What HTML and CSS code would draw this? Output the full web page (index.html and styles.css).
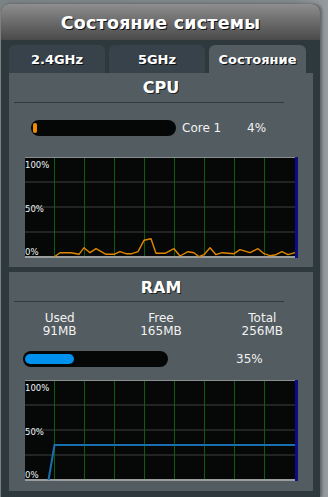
FILE: index.html
```html
<!DOCTYPE html>
<html lang="ru">
<head>
<meta charset="utf-8">
<title>Состояние системы</title>
<link rel="stylesheet" href="styles.css">
</head>
<body>
<div class="panel">
  <div class="title">Состояние системы</div>
  <div class="tabs">
    <div class="tab">2.4GHz</div>
    <div class="tab">5GHz</div>
    <div class="tab active">Состояние</div>
  </div>
  <div class="content">
    <section class="block cpu">
      <h3 class="block-title">CPU</h3>
      <div class="sep"></div>
      <div class="bar-row cpu-row">
        <div class="bar"><div class="fill fill-cpu" style="width:3%"></div></div>
        <span class="core-label">Core 1</span>
        <span class="core-pct">4%</span>
      </div>
      <div class="graph">
        <svg width="273" height="101" viewBox="0 0 273 101">
          <rect x="0" y="0" width="273" height="101" fill="#060808"/>
          <rect x="0" y="24" width="270" height="2" fill="#222424"/>
          <rect x="0" y="49" width="270" height="2" fill="#222424"/>
          <rect x="0" y="74" width="270" height="2" fill="#222424"/>
          <g fill="#0e5c10">
            <rect x="29" y="0" width="1" height="100"/>
            <rect x="59" y="0" width="1" height="100"/>
            <rect x="89" y="0" width="1" height="100"/>
            <rect x="119" y="0" width="1" height="100"/>
            <rect x="149" y="0" width="1" height="100"/>
            <rect x="179" y="0" width="1" height="100"/>
            <rect x="209" y="0" width="1" height="100"/>
            <rect x="239" y="0" width="1" height="100"/>
          </g>
          <rect x="0" y="0" width="270" height="1" fill="#8a8e8f"/>
          <rect x="0" y="99" width="270" height="2" fill="#9a9e9f"/>
          <rect x="270" y="0" width="3" height="101" fill="#0c0c86"/>
          <polyline fill="none" stroke="#e08600" stroke-width="1.4" stroke-linejoin="round"
            points="29,100 35,95.7 46,95.7 54,97.3 59,90.7 65,95.7 71,91.7 81,97.3 89,97.3 95,94.7 101,96.7 107,96.7 113,94.7 119,83.3 126,81.7 131,96.3 140,96.3 149,91.7 155,99 163,94.7 169,95.7 174,99.7 179,97.7 185,90.7 191,97.7 197,95.7 209,96.7 215,92.7 225,95.7 233,91.7 239,96.7 245,98.7 251,97.7 257,94.7 263,97.7 270,95.7"/>
          <g class="glabel">
            <text x="0" y="11">100%</text>
            <text x="0" y="55">50%</text>
            <text x="0" y="98">0%</text>
          </g>
        </svg>
      </div>
    </section>
    <section class="block ram">
      <h3 class="block-title">RAM</h3>
      <div class="sep"></div>
      <div class="mem-table">
        <div class="mem-col"><div>Used</div><div>91MB</div></div>
        <div class="mem-col"><div>Free</div><div>165MB</div></div>
        <div class="mem-col"><div>Total</div><div>256MB</div></div>
      </div>
      <div class="bar-row ram-row">
        <div class="bar"><div class="fill fill-ram" style="width:35%"></div></div>
        <span class="ram-pct">35%</span>
      </div>
      <div class="graph">
        <svg width="273" height="101" viewBox="0 0 273 101">
          <rect x="0" y="0" width="273" height="101" fill="#060808"/>
          <rect x="0" y="24" width="270" height="2" fill="#222424"/>
          <rect x="0" y="49" width="270" height="2" fill="#222424"/>
          <rect x="0" y="74" width="270" height="2" fill="#222424"/>
          <g fill="#0e5c10">
            <rect x="29" y="0" width="1" height="100"/>
            <rect x="59" y="0" width="1" height="100"/>
            <rect x="89" y="0" width="1" height="100"/>
            <rect x="119" y="0" width="1" height="100"/>
            <rect x="149" y="0" width="1" height="100"/>
            <rect x="179" y="0" width="1" height="100"/>
            <rect x="209" y="0" width="1" height="100"/>
            <rect x="239" y="0" width="1" height="100"/>
          </g>
          <rect x="0" y="0" width="270" height="1" fill="#8a8e8f"/>
          <rect x="0" y="99" width="270" height="2" fill="#9a9e9f"/>
          <rect x="270" y="0" width="3" height="101" fill="#0c0c86"/>
          <polyline fill="none" stroke="#1a6fae" stroke-width="2" stroke-linejoin="miter"
            points="23.5,100 29.5,65 270,65"/>
          <g class="glabel">
            <text x="0" y="11">100%</text>
            <text x="0" y="55">50%</text>
            <text x="0" y="98">0%</text>
          </g>
        </svg>
      </div>
    </section>
  </div>
</div>
</body>
</html>
```
FILE: styles.css
```css
html, body {
  margin: 0;
  padding: 0;
}
body {
  background: linear-gradient(to right, #7a8286 0%, #7f878b 90%, #959b9e 100%);
  font-family: "DejaVu Sans", Verdana, sans-serif;
  color: #fff;
  height: 497px;
  overflow: hidden;
}
.panel {
  margin: 4px 0 0 1px;
  width: 319px;
  min-height: 493px;
  background: #2e393d;
  border-radius: 8px 8px 0 0;
  box-shadow: 2px 0 3px rgba(0, 0, 0, 0.35);
}
.title {
  height: 36px;
  line-height: 38px;
  text-align: center;
  font-weight: bold;
  font-size: 17.5px;
  letter-spacing: 0.2px;
  border-radius: 8px 8px 0 0;
  background: linear-gradient(to bottom, #8e8e8e 0%, #6b6b6b 50%, #4a4a4a 100%);
  text-shadow: 1px 1px 0 #111;
}
.tabs {
  display: flex;
  gap: 4px;
  padding: 5px 0 0 8px;
}
.tab {
  width: 96px;
  height: 28px;
  line-height: 29px;
  text-align: center;
  font-weight: bold;
  font-size: 13px;
  background: #37424a;
  border-radius: 6px 6px 0 0;
  text-shadow: 1px 1px 0 #111;
}
.tab.active {
  width: 97px;
  background: #525c61;
}
.content {
  margin: 0 7px 0 8px;
  display: flex;
  flex-direction: column;
  gap: 5px;
}
.block {
  background: #525c61;
}
.cpu {
  height: 194px;
  padding-top: 5px;
  box-sizing: border-box;
}
.ram {
  height: 219px;
  padding-top: 6px;
  box-sizing: border-box;
}
.block-title {
  margin: 0;
  font-size: 16px;
  line-height: 20px;
  font-weight: bold;
  text-align: center;
  text-shadow: 1px 1px 0 #222;
}
.sep {
  margin: 4px 0 0 5px;
  width: 270px;
  height: 1px;
  background: #30393d;
}
.ram .sep {
  margin-top: 3px;
}
.bar-row {
  display: flex;
  align-items: center;
  font-size: 12px;
  line-height: 16px;
  color: #f2f2f2;
}
.cpu-row {
  margin: 17px 0 0 22px;
}
.ram-row {
  margin: 13px 0 0 14px;
}
.bar {
  width: 145px;
  height: 16px;
  box-sizing: border-box;
  padding: 3px 2px;
  background: #050707;
  border-radius: 8px;
}
.fill {
  height: 10px;
  border-radius: 5px;
}
.fill-cpu {
  background: #f08c00;
  border-radius: 3px;
}
.fill-ram {
  background: #0090ee;
}
.core-label {
  margin-left: 6px;
  width: 65px;
}
.ram-pct {
  margin-left: 68px;
}
.graph {
  margin: 21px 0 0 16px;
  height: 101px;
}
.graph svg {
  display: block;
}
.ram .graph {
  margin-top: 13px;
}
.glabel text {
  font-family: "DejaVu Sans", Verdana, sans-serif;
  font-size: 8.5px;
  fill: #eef4f6;
}
.mem-table {
  margin-top: 10px;
  display: grid;
  grid-template-columns: repeat(3, 1fr);
  font-size: 12px;
  line-height: 13px;
  text-align: center;
  color: #f2f2f2;
}
```
